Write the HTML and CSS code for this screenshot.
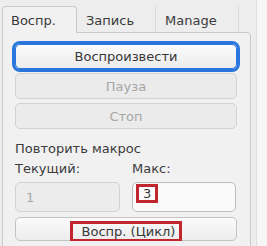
FILE: index.html
```html
<!DOCTYPE html>
<html>
<head>
<meta charset="utf-8">
<link rel="stylesheet" href="styles.css">
</head>
<body>
<div class="window">
  <div class="main">
    <div class="tabs">
      <div class="tab active">Воспр.</div>
      <div class="tab">Запись</div>
      <div class="tab last">Manage</div>
    </div>
    <div class="panel">
      <div class="buttons">
        <div class="btn focused">Воспроизвести</div>
        <div class="btn disabled">Пауза</div>
        <div class="btn disabled">Стоп</div>
      </div>
      <div class="label title">Повторить макрос</div>
      <div class="grid">
        <div class="label">Текущий:</div>
        <div class="label">Макс:</div>
        <div class="input disabled"><span>1</span></div>
        <div class="input"><span class="mark">3</span></div>
      </div>
      <div class="btn loop"><span class="mark wide">Воспр. (Цикл)</span></div>
    </div>
  </div>
  <div class="side"></div>
</div>
</body>
</html>
```
FILE: styles.css
```css
html, body {
  margin: 0;
  padding: 0;
}
body {
  width: 267px;
  height: 246px;
  overflow: hidden;
  background: #ededed;
  font-family: "DejaVu Sans", sans-serif;
  font-size: 13px;
  color: #383838;
}
.window {
  display: flex;
  height: 246px;
}
.main {
  width: 257px;
  padding: 6px 0 0 2px;
  box-sizing: border-box;
  border-right: 1px solid #dedede;
}
.side {
  flex: 1;
  background: #f6f6f6;
}
.tabs {
  display: flex;
  height: 26px;
  position: relative;
  z-index: 1;
}
.tab {
  box-sizing: border-box;
  height: 26px;
  padding: 7px 0 0 9px;
  color: #3a3a3a;
  border-right: 1px solid #dcdcdc;
}
.tab:nth-child(1) { width: 75px; }
.tab:nth-child(2) { width: 79px; }
.tab:nth-child(3) { width: 83px; }
.tab.active {
  background: #f1f1f1;
  border: 1px solid #c9c9c9;
  border-bottom: none;
  border-radius: 4px 4px 0 0;
  height: 27px;
  padding-top: 6px;
  padding-left: 8px;
}
.panel {
  box-sizing: border-box;
  width: 249px;
  height: 220px;
  background: #f1f1f1;
  border: 1px solid #c9c9c9;
  border-radius: 0 4px 0 0;
  padding: 11px 13px 0 12px;
}
.buttons {
  display: flex;
  flex-direction: column;
  gap: 4px;
}
.btn {
  box-sizing: border-box;
  height: 26px;
  border: 1px solid #c3c3c3;
  border-radius: 5px;
  background: linear-gradient(#fbfbfb, #ececec);
  display: flex;
  align-items: center;
  justify-content: center;
  color: #383838;
}
.btn.focused {
  height: 25px;
  box-shadow: 0 0 0 3px #2a76dd;
  border-color: #2a76dd;
}
.btn.disabled {
  background: #ebebeb;
  border-color: #d2d2d2;
  color: #a6a6a6;
}
.label {
  color: #3c3c3c;
  height: 19px;
  line-height: 19px;
}
.title {
  margin-top: 10px;
}
.grid {
  display: grid;
  grid-template-columns: 105px 104px;
  column-gap: 12px;
  row-gap: 4px;
  margin-top: 1px;
}
.input {
  box-sizing: border-box;
  height: 30px;
  border: 1px solid #bcbcbc;
  border-radius: 5px;
  background: #fafafa;
  display: flex;
  align-items: flex-start;
  padding: 1px 0 0 3px;
}
.input.disabled {
  background: #ececec;
  border-color: #d2d2d2;
  color: #a6a6a6;
  padding: 0 0 0 10px;
  align-items: center;
}
.mark {
  border: 3px solid #c0262d;
  padding: 0 4px;
  line-height: 13px;
}
.loop {
  margin-top: 5px;
  height: 24px;
  align-items: flex-end;
}
.mark.wide {
  padding: 0 4px 0 9px;
  border-bottom-width: 2px;
  line-height: 15px;
  margin-bottom: -1px;
}
```
